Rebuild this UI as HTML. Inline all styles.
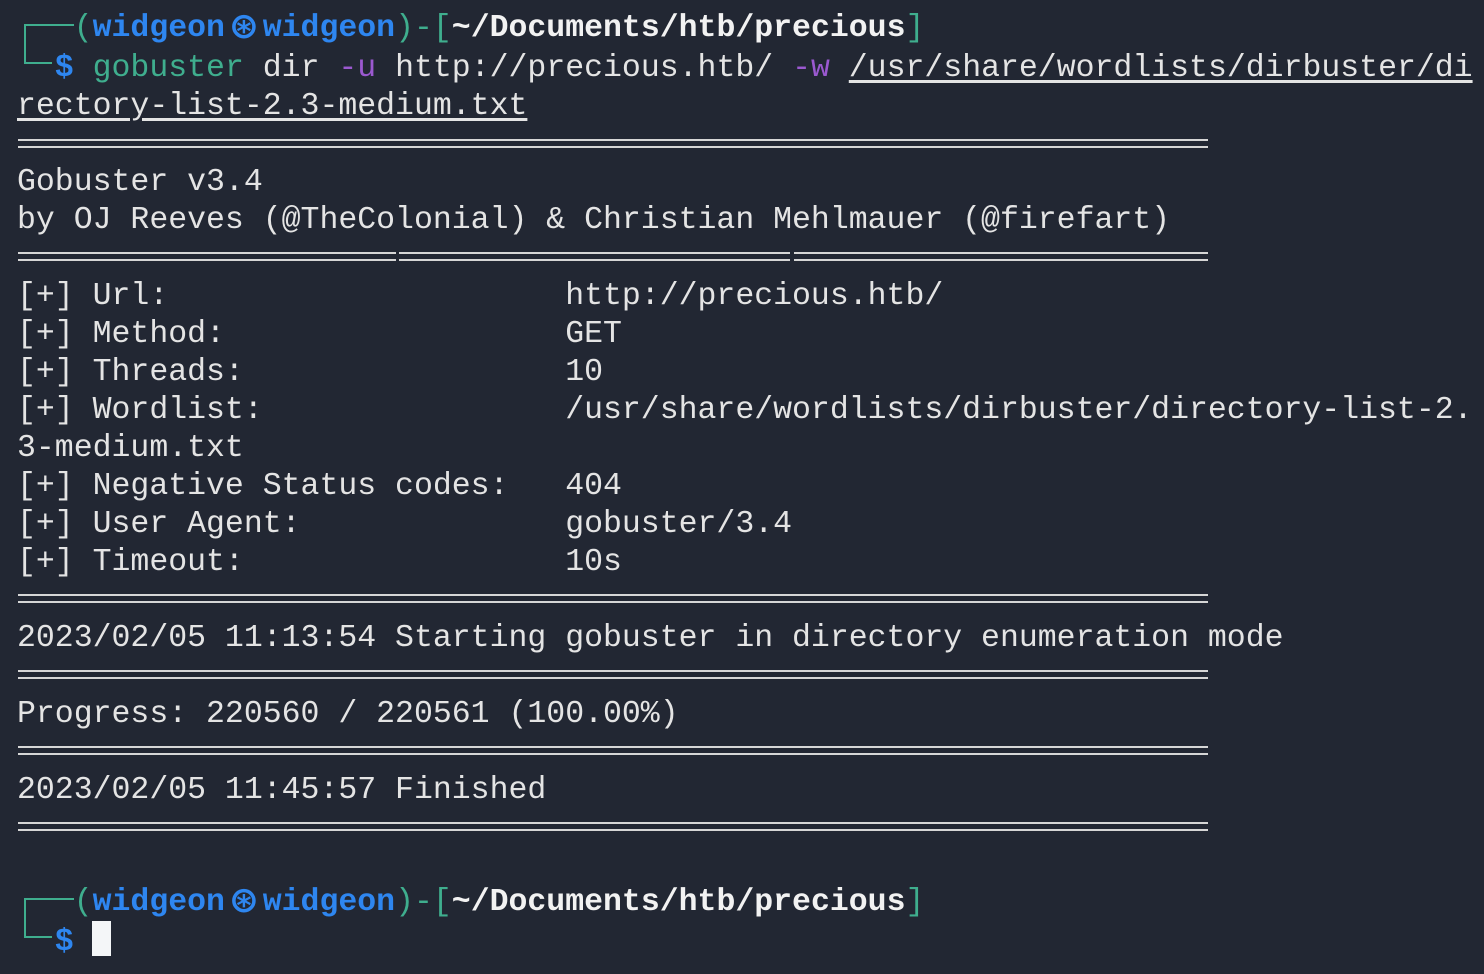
<!DOCTYPE html>
<html><head><meta charset="utf-8"><style>
html,body{margin:0;padding:0;}
body{width:1484px;height:974px;background:#222733;position:relative;overflow:hidden;font-family:"Liberation Mono","DejaVu Sans Mono",monospace;font-size:31.5px;color:#e4e4e4;}
.l{position:absolute;left:17px;height:38px;line-height:38px;white-space:pre;}
.g{color:#3fae8e}.b{color:#2e86f0;font-weight:bold}.w{font-weight:bold;color:#f2f2f2}.p{color:#9b59d0}.u{text-decoration:underline;text-underline-offset:4px}
.k{display:inline-block;width:37.8px;text-align:center;font-weight:bold;font-family:"DejaVu Sans",sans-serif;font-size:36px;line-height:30px;vertical-align:top;margin-top:2px}
.s{position:absolute;height:2px;background:#d6d6d6;}
.bx{position:absolute;background:#3fae8e;}
</style></head><body>
<div class="bx" style="left:24px;top:24px;width:2px;height:40px"></div>
<div class="bx" style="left:24px;top:24px;width:50px;height:2px"></div>
<div class="bx" style="left:24px;top:62px;width:28px;height:2px"></div>
<div class="l" style="top:10px"><span class="g">   (</span><span class="b">widgeon<span class="k">⊛</span>widgeon</span><span class="g">)-[</span><span class="w">~/Documents/htb/precious</span><span class="g">]</span></div>
<div class="l" style="top:50px"><span class="b">  $ </span><span class="g">gobuster</span> dir <span class="p">-u</span> http://precious.htb/ <span class="p">-w</span> <span class="u">/usr/share/wordlists/dirbuster/di</span></div>
<div class="l u" style="top:88px">rectory-list-2.3-medium.txt</div>
<div class="s" style="left:18px;top:139px;width:1190px"></div><div class="s" style="left:18px;top:146px;width:1190px"></div>
<div class="l" style="top:164px">Gobuster v3.4</div>
<div class="l" style="top:202px">by OJ Reeves (@TheColonial) &amp; Christian Mehlmauer (@firefart)</div>
<div class="s" style="left:18px;top:252px;width:378px"></div><div class="s" style="left:18px;top:259px;width:378px"></div>
<div class="s" style="left:399px;top:252px;width:391px"></div><div class="s" style="left:399px;top:259px;width:391px"></div>
<div class="s" style="left:794px;top:252px;width:414px"></div><div class="s" style="left:794px;top:259px;width:414px"></div>
<div class="l" style="top:278px">[+] Url:                     http://precious.htb/</div>
<div class="l" style="top:316px">[+] Method:                  GET</div>
<div class="l" style="top:354px">[+] Threads:                 10</div>
<div class="l" style="top:392px">[+] Wordlist:                /usr/share/wordlists/dirbuster/directory-list-2.</div>
<div class="l" style="top:430px">3-medium.txt</div>
<div class="l" style="top:468px">[+] Negative Status codes:   404</div>
<div class="l" style="top:506px">[+] User Agent:              gobuster/3.4</div>
<div class="l" style="top:544px">[+] Timeout:                 10s</div>
<div class="s" style="left:18px;top:594px;width:1190px"></div><div class="s" style="left:18px;top:601px;width:1190px"></div>
<div class="l" style="top:620px">2023/02/05 11:13:54 Starting gobuster in directory enumeration mode</div>
<div class="s" style="left:18px;top:670px;width:1190px"></div><div class="s" style="left:18px;top:677px;width:1190px"></div>
<div class="l" style="top:696px">Progress: 220560 / 220561 (100.00%)</div>
<div class="s" style="left:18px;top:746px;width:1190px"></div><div class="s" style="left:18px;top:753px;width:1190px"></div>
<div class="l" style="top:772px">2023/02/05 11:45:57 Finished</div>
<div class="s" style="left:18px;top:822px;width:1190px"></div><div class="s" style="left:18px;top:829px;width:1190px"></div>
<div class="bx" style="left:24px;top:898px;width:2px;height:40px"></div>
<div class="bx" style="left:24px;top:898px;width:50px;height:2px"></div>
<div class="bx" style="left:24px;top:936px;width:28px;height:2px"></div>
<div class="l" style="top:884px"><span class="g">   (</span><span class="b">widgeon<span class="k">⊛</span>widgeon</span><span class="g">)-[</span><span class="w">~/Documents/htb/precious</span><span class="g">]</span></div>
<div class="l" style="top:924px"><span class="b">  $</span></div>
<div style="position:absolute;left:92px;top:921px;width:19px;height:35px;background:#f4f6f8"></div>
</body></html>
